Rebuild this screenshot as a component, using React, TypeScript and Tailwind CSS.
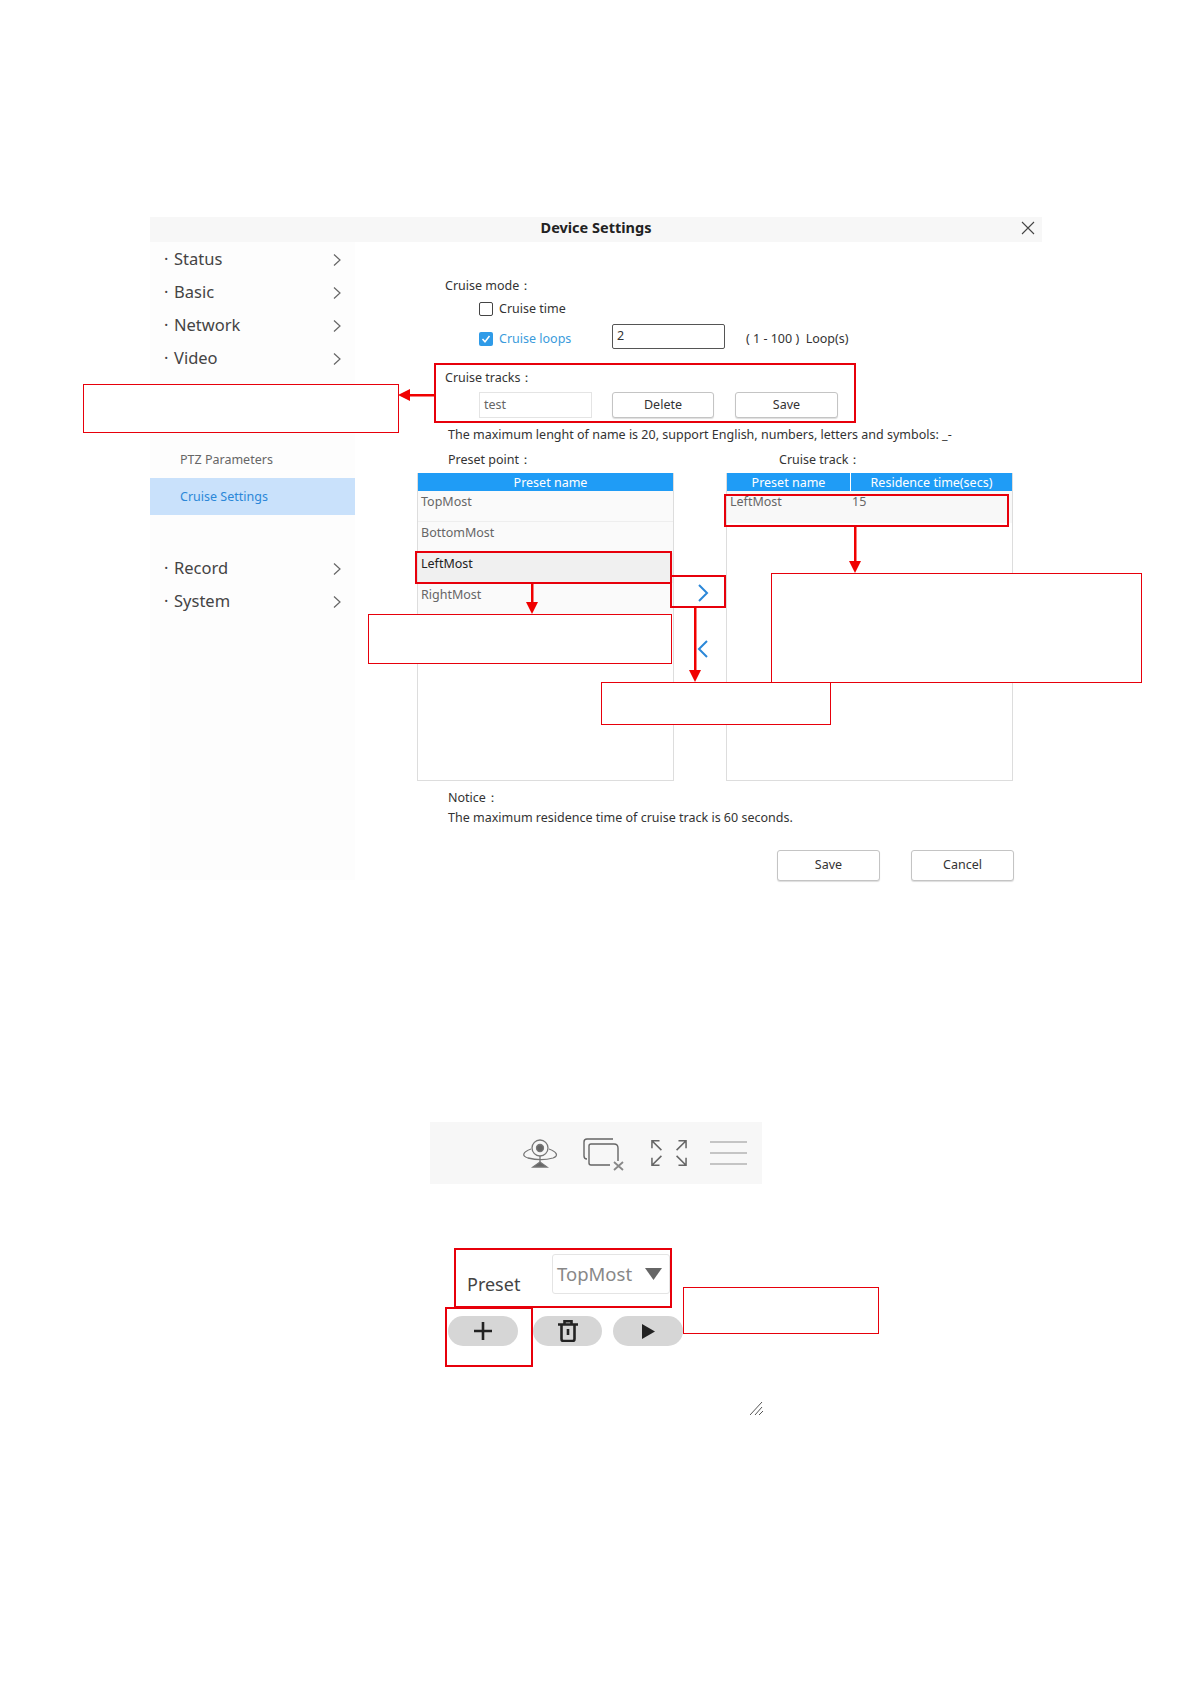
import React from "react";

const font = { fontFamily: '"Noto Sans", "Liberation Sans", sans-serif' };

function Chevron() {
  return (
    <svg width="10" height="14" viewBox="0 0 10 14" fill="none" stroke="#666" strokeWidth="1.2">
      <path d="M2 1.5 L8 7 L2 12.5" />
    </svg>
  );
}

function NavRow({ label }: { label: string }) {
  return (
    <div className="h-[33px] flex items-center pl-[14px] pr-[13px] justify-between text-[16.5px] text-[#444]">
      <span>
        <span className="inline-block w-[10px]">·</span>
        {label}
      </span>
      <Chevron />
    </div>
  );
}

function Btn({ label, w, h = "h-[26px]" }: { label: string; w: string; h?: string }) {
  return (
    <div className={`${w} ${h} border border-[#c4c4c4] rounded-[3px] flex items-center justify-center text-[12.5px] text-[#333] bg-white shadow-[0_1px_1px_#ddd]`}>
      {label}
    </div>
  );
}

function Box({ className }: { className: string }) {
  return <div className={`absolute border-red-600 ${className}`} />;
}

function Annotations() {
  return (
    <>
      <Box className="left-[83px] top-[384px] w-[316px] h-[49px] border-[1.5px] bg-white" />
      <Box className="left-[368px] top-[614px] w-[304px] h-[50px] border-[1.5px] bg-white" />
      <Box className="left-[771px] top-[573px] w-[371px] h-[110px] border-[1.5px] bg-white" />
      <Box className="left-[601px] top-[682px] w-[230px] h-[43px] border-[1.5px] bg-white" />
      <Box className="left-[683px] top-[1287px] w-[196px] h-[47px] border-[1.5px] bg-white" />

      <Box className="left-[434px] top-[363px] w-[422px] h-[60px] border-[2.5px]" />
      <Box className="left-[415px] top-[551px] w-[257px] h-[33px] border-[2.5px]" />
      <Box className="left-[670px] top-[575px] w-[56px] h-[33px] border-[2.5px]" />
      <Box className="left-[724px] top-[494px] w-[285px] h-[33px] border-[2.5px]" />
      <Box className="left-[454px] top-[1248px] w-[218px] h-[60px] border-[2.5px]" />
      <Box className="left-[445px] top-[1307px] w-[88px] h-[60px] border-[2.5px]" />

      <svg className="absolute left-0 top-0 pointer-events-none" width="1191" height="1684" fill="#f00000" stroke="none">
        <rect x="409" y="394" width="27" height="2.5" />
        <path d="M398 395 L410 389 L410 401 Z" />
        <rect x="531" y="584" width="2.5" height="20" />
        <path d="M532 614 L526 602 L538 602 Z" />
        <rect x="694" y="607" width="2.5" height="65" />
        <path d="M695 682 L689 670 L701 670 Z" />
        <rect x="854" y="527" width="2.5" height="35" />
        <path d="M855 573 L849 561 L861 561 Z" />
      </svg>
    </>
  );
}

export default function App() {
  return (
    <div className="relative w-[1191px] h-[1684px] bg-white overflow-hidden pt-[217px]" style={font}>
      <div className="ml-[150px] w-[892px]">
        <div className="relative h-[25px] bg-[#f7f7f7] flex items-center justify-center">
          <span className="text-[14.5px] leading-[20px] font-bold text-[#222] mb-[5px]">Device Settings</span>
          <svg className="absolute right-[7px] top-[4px]" width="14" height="14" viewBox="0 0 14 14" stroke="#444" strokeWidth="1.1">
            <path d="M1 1 L13 13 M13 1 L1 13" />
          </svg>
        </div>
        <div className="flex">
          <aside className="w-[205px] h-[638px] bg-[#fdfdfd] pt-[1px]">
            <NavRow label="Status" />
            <NavRow label="Basic" />
            <NavRow label="Network" />
            <NavRow label="Video" />
            <div className="mt-[69px] pl-[30px] h-[33px] flex items-center text-[12.5px] text-[#666]">PTZ Parameters</div>
            <div className="h-[37px] mt-[1px] pl-[30px] pt-[1px] flex items-center text-[12.5px] text-[#2b87d8] bg-[#c9e1fb]">Cruise Settings</div>
            <div className="mt-[37px]">
              <NavRow label="Record" />
              <NavRow label="System" />
            </div>
          </aside>
          <main className="w-[687px] text-[12.5px] text-[#333] pt-[34px]">
            <div className="pl-[90px] h-[20px] flex items-center">Cruise mode：</div>
            <div className="pl-[124px] mt-[3px] h-[20px] flex items-center gap-[6px]">
              <span className="w-[14px] h-[14px] border border-[#444] rounded-[2px]" />
              <span>Cruise time</span>
            </div>
            <div className="pl-[124px] mt-[5px] h-[25px] flex items-center text-[#3a9bdc]">
              <span className="w-[14px] h-[14px] rounded-[2px] bg-[#2f9be8] flex items-center justify-center mr-[6px] mt-[4px]">
                <svg width="10" height="10" viewBox="0 0 10 10" fill="none" stroke="white" strokeWidth="1.5">
                  <path d="M1.5 5 L4 7.8 L8.5 2" />
                </svg>
              </span>
              <span className="w-[113px] mt-[6px]">Cruise loops</span>
              <div className="w-[113px] h-[25px] border border-[#555] rounded-[2px] pl-[4px] flex items-center text-[#333]">2</div>
              <span className="ml-[21px] mt-[6px] text-[#333] whitespace-pre">( 1 - 100 )  Loop(s)</span>
            </div>
            <div className="pl-[90px] mt-[19px] h-[20px] flex items-center">Cruise tracks：</div>
            <div className="pl-[124px] mt-[4px] flex items-center">
              <div className="w-[113px] h-[26px] border border-[#e4e4e4] pl-[4px] flex items-center text-[#666]">test</div>
              <div className="ml-[20px]"><Btn label="Delete" w="w-[102px]" /></div>
              <div className="ml-[21px]"><Btn label="Save" w="w-[103px]" /></div>
            </div>
            <div className="pl-[93px] mt-[7px] h-[20px] flex items-center whitespace-nowrap">
              The maximum lenght of name is 20, support English, numbers, letters and symbols: _-
            </div>
            <div className="pl-[93px] mt-[5px] h-[20px] flex items-center">
              <span className="w-[331px]">Preset point：</span>
              <span>Cruise track：</span>
            </div>
            <div className="flex mt-[3px] ml-[62px] h-[308px]">
              <div className="w-[257px] border-x border-b border-[#ddd] flex flex-col">
                <div className="h-[18px] bg-[#1f9cf6] text-white flex items-center justify-center pl-[10px] pt-[3px]">Preset name</div>
                <div className="h-[31px] pl-[3px] text-[#666] bg-[#fafafa] border-b border-[#eee] leading-[22px]">TopMost</div>
                <div className="h-[31px] pl-[3px] text-[#666] bg-[#fafafa] leading-[22px]">BottomMost</div>
                <div className="h-[30px] pl-[3px] text-[#222] bg-[#f0f0f0] leading-[22px]">LeftMost</div>
                <div className="h-[31px] pl-[3px] text-[#666] bg-[#fafafa] leading-[23px]">RightMost</div>
              </div>
              <div className="w-[52px] flex flex-col items-center pl-[5px] pt-[111px] gap-[38px]">
                <svg width="12" height="18" viewBox="0 0 12 18" fill="none" stroke="#2b87d8" strokeWidth="2"><path d="M2 1 L10 9 L2 17" /></svg>
                <svg width="12" height="18" viewBox="0 0 12 18" fill="none" stroke="#2b87d8" strokeWidth="2"><path d="M10 1 L2 9 L10 17" /></svg>
              </div>
              <div className="w-[287px] border-x border-b border-[#ddd] flex flex-col">
                <div className="h-[18px] bg-[#1f9cf6] text-white flex">
                  <div className="w-[124px] border-r border-white flex items-center justify-center pt-[3px]">Preset name</div>
                  <div className="flex-1 flex items-center justify-center pt-[3px]">Residence time(secs)</div>
                </div>
                <div className="h-[32px] flex text-[#666] bg-[#f8f8f8] leading-[22px]">
                  <div className="w-[124px] pl-[3px]">LeftMost</div>
                  <div className="pl-[1px]">15</div>
                </div>
              </div>
            </div>
            <div className="pl-[93px] mt-[7px] h-[20px] flex items-center">Notice：</div>
            <div className="pl-[93px] h-[20px] flex items-center whitespace-nowrap">The maximum residence time of cruise track is 60 seconds.</div>
            <div className="flex ml-[422px] mt-[22px] gap-[31px]">
              <Btn label="Save" w="w-[103px]" h="h-[31px]" />
              <Btn label="Cancel" w="w-[103px]" h="h-[31px]" />
            </div>
          </main>
        </div>
      </div>

      <div className="ml-[430px] mt-[241px] w-[332px] h-[62px] bg-[#f7f7f7] flex items-center pl-[90px]">
        <svg width="40" height="34" viewBox="0 0 40 34" fill="none" stroke="#777" strokeWidth="1.3">
          <circle cx="20" cy="12" r="8" />
          <circle cx="20" cy="12" r="3.5" fill="#666" />
          <path d="M11 13 C3 16 1 20 8 22 C16 24 26 24 33 22 C39 20 37 16 29 13" />
          <path d="M20 20 V26" />
          <path d="M13 31 L20 26 L27 31 Z" fill="#666" />
        </svg>
        <svg className="ml-[21px]" width="44" height="36" viewBox="0 0 44 36" fill="none" stroke="#666" strokeWidth="1.4">
          <path d="M32 4 H6 Q3 4 3 7 V21 Q3 24 6 24" />
          <path d="M10 9 H33 Q37 9 37 13 V26 M29 30 H10 Q8 30 8 28 V11 Q8 9 10 9" />
          <path d="M33 27 L42 35 M42 27 L33 35" stroke="#888" strokeWidth="1.8" />
        </svg>
        <svg className="ml-[26px]" width="36" height="28" viewBox="0 0 38 28" fill="none" stroke="#666" strokeWidth="1.6">
          <path d="M1 9 V1 H9 M1 1 L11 11" />
          <path d="M37 9 V1 H29 M37 1 L27 11" />
          <path d="M1 19 V27 H9 M1 27 L11 17" />
          <path d="M37 19 V27 H29 M37 27 L27 17" />
        </svg>
        <div className="ml-[23px] w-[37px] flex flex-col gap-[9.5px]">
          <div className="h-[1.5px] bg-[#c4c4c4]" />
          <div className="h-[1.5px] bg-[#c4c4c4]" />
          <div className="h-[1.5px] bg-[#c4c4c4]" />
        </div>
      </div>

      <div className="ml-[467px] mt-[70px] w-[210px] h-[40px] flex items-center relative">
        <span className="text-[18px] text-[#444] mt-[20px]">Preset</span>
        <div className="absolute left-[85px] top-0 w-[118px] h-[40px] border border-[#e4e4e4] rounded-[3px] pl-[4px] flex items-center justify-between pr-[7px] text-[18.5px] text-[#888]">
          <span>TopMost</span>
          <svg width="17" height="12" viewBox="0 0 17 12" fill="#666"><path d="M0 0 H17 L8.5 12 Z" /></svg>
        </div>
      </div>

      <div className="ml-[448px] mt-[22px] flex">
        <div className="w-[70px] h-[30px] rounded-full bg-[#d6d6d6] flex items-center justify-center">
          <svg width="18" height="18" viewBox="0 0 18 18" stroke="#222" strokeWidth="2.6"><path d="M9 0 V18 M0 9 H18" /></svg>
        </div>
        <div className="ml-[15px] w-[69px] h-[30px] rounded-full bg-[#d6d6d6] flex items-center justify-center">
          <svg width="20" height="22" viewBox="0 0 20 22" fill="none" stroke="#222" strokeWidth="2.6">
            <path d="M0 4.5 H20 M6.5 4 V1.2 H13.5 V4 M3.5 5 V19 Q3.5 21 5.5 21 H14.5 Q16.5 21 16.5 19 V5 M10 9 V15" />
          </svg>
        </div>
        <div className="ml-[11px] w-[70px] h-[30px] rounded-full bg-[#d6d6d6] flex items-center justify-center">
          <svg width="13" height="15" viewBox="0 0 13 15" fill="#222"><path d="M0 0 L13 7.5 L0 15 Z" /></svg>
        </div>
      </div>

      <svg className="ml-[750px] mt-[56px]" width="14" height="13" viewBox="0 0 14 13" fill="none" stroke="#555" strokeWidth="1">
        <path d="M0 13 L12 0 M5 13 L12 5 M9 13 L13 9" />
      </svg>

      <Annotations />
    </div>
  );
}
